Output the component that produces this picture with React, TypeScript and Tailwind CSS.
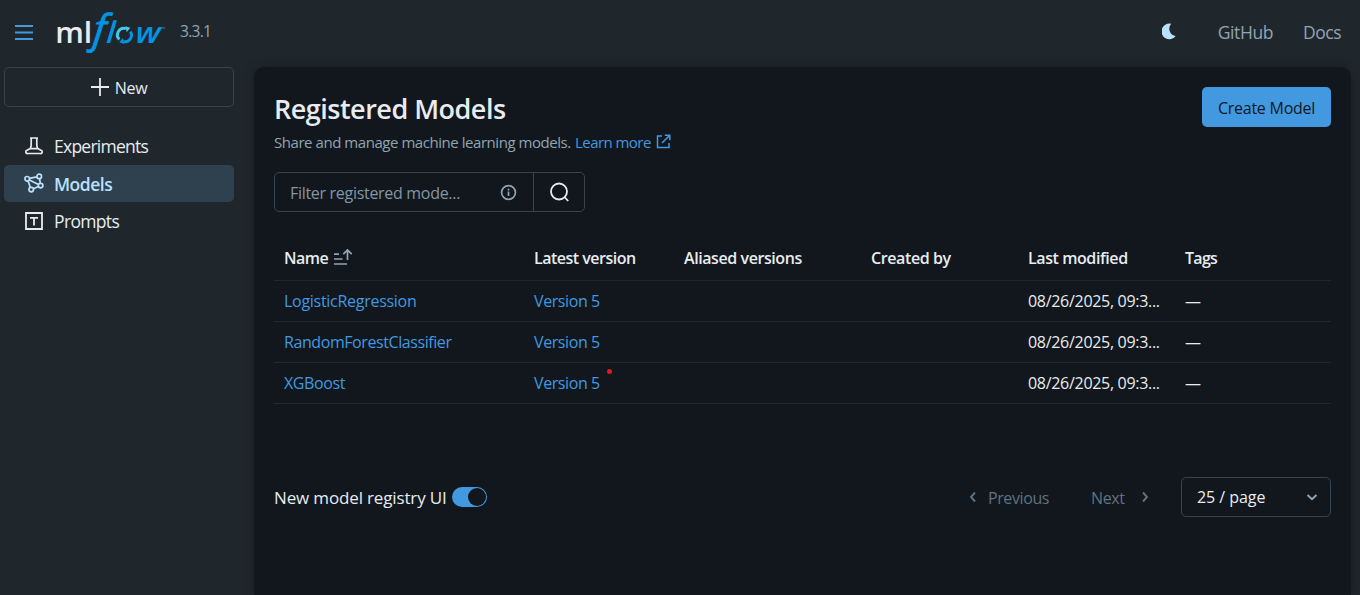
import type { ReactNode } from "react";

const models = [
  { name: "LogisticRegression", tracking: "tracking-[-0.28px]" },
  { name: "RandomForestClassifier", tracking: "tracking-[-0.42px]" },
  { name: "XGBoost", tracking: "tracking-[-0.4px]" },
];

function Logo() {
  return (
    <svg width="112" height="50" viewBox="56 5 112 50" className="block overflow-visible" fontFamily="'Open Sans', sans-serif">
      <text x="55.2" y="43" fontSize="29.5" fontWeight="600" fill="#E8ECF0" textLength="37" lengthAdjust="spacingAndGlyphs">ml</text>
      <text transform="translate(92.2 42.7) skewX(-6)" fontSize="40" fontStyle="italic" fill="#0194E2" stroke="#0194E2" strokeWidth="0.8">f</text>
      <text transform="translate(106 43) skewX(-5)" fontSize="30" fontWeight="600" fontStyle="italic" fill="#0194E2">l</text>
      <text transform="translate(135 43) skewX(-4)" fontSize="29.5" fontWeight="600" fontStyle="italic" fill="#0194E2" textLength="25" lengthAdjust="spacingAndGlyphs">w</text>
      <path d="M119.400 39.500A6.500 6.500 0 0 1 126 28.700" fill="none" stroke="#43C9ED" strokeWidth="3" />
      <path d="M125.400 26.200l4.900 1.600-3.600 4.400z" fill="#43C9ED" />
      <path d="M130.300 31.600A6.500 6.500 0 0 1 123.600 41.600" fill="none" stroke="#0194E2" strokeWidth="3" />
      <path d="M124.300 44l-5-1.700 3.700-4.400z" fill="#0194E2" />
      <text x="161" y="30.5" fontSize="5.500" fill="#3d7fa6">™</text>
    </svg>
  );
}

function NavItem({ icon, children, tracking, active }: { icon: ReactNode; children: ReactNode; tracking: string; active?: boolean }) {
  return (
    <a className={active
      ? "flex h-[37.5px] items-center gap-[10px] rounded-[5px] bg-[#2F404E] pl-5 text-[17.5px] font-semibold text-[#BAE1FC]"
      : "flex h-[37.5px] items-center gap-[10px] rounded-[5px] pl-5 text-[17.5px] text-[#E8ECF0]"}>
      {icon}
      <span className={tracking}>{children}</span>
    </a>
  );
}

const FlaskIcon = () => (
  <svg width="20" height="20" viewBox="0 0 20 20" fill="none" stroke="currentColor" strokeWidth="1.7" strokeLinejoin="round">
    <path d="M6 2h8M7.200 2v7.500L6.400 12.400 3 14.200a1.700 1.700 0 0 0 .8 3.300h12.400a1.700 1.700 0 0 0 .8-3.300L13.600 12.400 12.800 9.500V2M6.200 12.600h7.600" />
  </svg>
);

const ModelsIcon = () => (
  <svg width="20" height="20" viewBox="0 0 20 20" fill="none" stroke="currentColor" strokeWidth="1.7">
    <circle cx="3.200" cy="5.800" r="2.300" />
    <circle cx="15.200" cy="3.400" r="2.300" />
    <circle cx="16.600" cy="12.600" r="2.300" />
    <circle cx="7.200" cy="16.600" r="2.300" />
    <path d="M5.500 5.300l7.400-1.400M15.600 5.700l.7 4.600M4.100 8l2.200 6.400M9.400 15.700l5-2.200M5.300 7l9.200 4.600" />
  </svg>
);

const PromptIcon = () => (
  <svg width="20" height="20" viewBox="0 0 20 20" fill="none" stroke="currentColor" strokeWidth="1.8">
    <path d="M2 2h16v16H2zM6 6.9h8M10 6.9V14.5" />
  </svg>
);

const Chevron = ({ d }: { d: string }) => (
  <svg width="12" height="12" viewBox="0 0 12 12" fill="none" stroke="currentColor" strokeWidth="1.9">
    <path d={d} />
  </svg>
);

export default function App() {
  return (
    <div className="flex h-[595px] w-[1360px] flex-col overflow-hidden bg-[#1F272D] font-['Open_Sans','Noto_Sans',sans-serif] text-[16px] text-[#E8ECF0]">
      <header className="flex h-[67px] shrink-0 items-center pr-[19px] pb-[5px] pl-[15px]">
        <svg className="mt-px" width="18" height="16" viewBox="0 0 18 16" fill="none" stroke="#4299E0" strokeWidth="1.900">
          <path d="M0 2h18M0 8.5h18M0 15h18" />
        </svg>
        <div className="-mt-0.5 ml-[23px]"><Logo /></div>
        <span className="ml-3 pt-0.5 text-[15.5px] tracking-[-0.7px] text-[#92A4B3]">3.3.1</span>
        <svg className="mt-px ml-auto" width="14" height="17" viewBox="0 0 14 17">
          <path d="M9.200.7A7.900 7.900 0 1 0 13.700 13.100 7.500 7.500 0 0 1 9.200.700z" fill="#BAE1FC" />
        </svg>
        <a className="ml-[42px] pt-[3px] text-[17.5px] tracking-[-0.4px] text-[#92A4B3]">GitHub</a>
        <a className="ml-[30px] pt-[3px] text-[17.5px] tracking-[-0.5px] text-[#92A4B3]">Docs</a>
      </header>
      <div className="flex min-h-0 flex-1">
        <aside className="w-[254px] shrink-0 pr-5 pl-1">
          <button className="flex h-10 w-full items-center justify-center gap-1.5 rounded-[5px] border border-[#37444F] tracking-[-0.3px]">
            <svg width="18" height="18" viewBox="0 0 18 18" stroke="currentColor" strokeWidth="1.8"><path d="M9 0v18M0 9h18" /></svg>
            <span className="pt-0.5">New</span>
          </button>
          <nav className="mt-5">
            <NavItem icon={<FlaskIcon />} tracking="tracking-[-0.75px]">Experiments</NavItem>
            <NavItem icon={<ModelsIcon />} tracking="pt-px tracking-[-0.5px]" active>Models</NavItem>
            <NavItem icon={<PromptIcon />} tracking="tracking-[-0.65px]">Prompts</NavItem>
          </nav>
        </aside>
        <main className="mr-[9px] flex-1 rounded-t-[10px] bg-[#11171C] px-5 pt-5 shadow-[0_0_12px_rgba(0,0,0,0.3)]">
          <div className="flex h-10 items-center justify-between">
            <h1 className="pt-1 text-[27px] font-semibold tracking-[-0.5px]">Registered Models</h1>
            <button className="h-10 w-[129px] rounded-[5px] bg-[#4299E0] pt-0.5 tracking-[-0.25px] whitespace-nowrap text-[#11171C]">Create Model</button>
          </div>
          <p className="mt-[3px] flex h-6 items-center text-[15px] whitespace-nowrap text-[#92A4B3]">
            <span className="w-[301px] tracking-[-0.45px]">Share and manage machine learning models.</span>
            <a className="flex items-center gap-[5px] tracking-[-0.55px] text-[#4299E0]">
              <span>Learn more</span>
              <svg className="-mt-0.5" width="15" height="15" viewBox="0 0 15 15" fill="none" stroke="currentColor" strokeWidth="1.5">
                <path d="M6 2H1.5v11.5H13V9M8.8 1.2h5v5M13.5 1.5L6 9" />
              </svg>
            </a>
          </p>
          <div className="mt-[18px] flex h-10 w-[311px] rounded-[5px] border border-[#37444F]">
            <div className="flex flex-1 items-center justify-between pr-4 pl-[15px] text-[#8396A5]">
              <span className="pt-0.5 tracking-[-0.3px]">Filter registered mode...</span>
              <svg width="17" height="17" viewBox="0 0 17 17" fill="none" stroke="#92A4B3" strokeWidth="1.7">
                <circle cx="8.5" cy="8.5" r="6.9" /><path d="M8.5 7.6V12M8.5 4.7v1.8" />
              </svg>
            </div>
            <div className="flex w-[51px] items-center justify-center border-l border-[#37444F]">
              <svg width="20" height="20" viewBox="0 0 20 20" fill="none" stroke="#E8ECF0" strokeWidth="1.8">
                <circle cx="10" cy="9.5" r="8" /><path d="M15.500 15l3.700 4" />
              </svg>
            </div>
          </div>
          <div className="mt-[23px]">
            <div className="grid h-[46px] grid-cols-[250px_150px_187px_157px_157px_156px] items-center border-b border-[#20282F] pt-px font-semibold tracking-[-0.5px] whitespace-nowrap *:pl-2.5">
              <div className="flex items-center gap-1.5">
                <span>Name</span>
                <svg className="-mt-0.5" width="19" height="18" viewBox="0 0 19 18" fill="none" stroke="#92A4B3" strokeWidth="1.7">
                  <path d="M0 6.2h5M0 11h8.5M0 16h13M13.5 12V2M9.3 6.2L13.5 2l4.2 4.2" />
                </svg>
              </div>
              <div>Latest version</div>
              <div className="tracking-[-0.42px]">Aliased versions</div>
              <div className="tracking-[-0.4px]">Created by</div>
              <div className="tracking-[-0.42px]">Last modified</div>
              <div className="tracking-[-0.7px]">Tags</div>
            </div>
            {models.map((m, i) => (
              <div key={m.name} className="grid h-[41px] grid-cols-[250px_150px_187px_157px_157px_156px] items-center border-b border-[#20282F] tracking-[-0.4px] whitespace-nowrap *:pl-2.5">
                <a className={`text-[#4299E0] ${m.tracking}`}>{m.name}</a>
                <div className="relative text-[#4299E0]">
                  Version 5
                  {i === 2 && <i className="absolute top-[-2px] left-[83px] size-[5px] rounded-full bg-[#E5191C]" />}
                </div>
                <div />
                <div />
                <div className="tracking-[-0.3px]">08/26/2025, 09:3...</div>
                <div>—</div>
              </div>
            ))}
          </div>
          <div className="mt-[73px] flex h-10 items-center">
            <span className="w-[178px] pt-px text-[17px] tracking-[-0.15px] whitespace-nowrap">New model registry UI</span>
            <div className="flex h-5 w-[35px] justify-end rounded-full bg-[#4299E0] p-px">
              <span className="size-[18px] rounded-full bg-[#11171C]" />
            </div>
            <div className="ml-auto flex items-center text-[#5F7281]">
              <Chevron d="M8 1.5L4 6l4 4.5" />
              <span className="ml-[9px] w-[103px] pt-0.5 tracking-[-0.4px]">Previous</span>
              <span className="w-12 pt-0.5 tracking-[-0.4px]">Next</span>
              <Chevron d="M4 1.5L8 6l-4 4.5" />
            </div>
            <div className="ml-[30px] flex h-10 w-[150px] items-center justify-between rounded-[5px] border border-[#37444F] pr-3 pl-[15px]">
              <span className="tracking-[-0.05px]">25 / page</span>
              <span className="text-[#92A4B3]"><Chevron d="M1.5 4L6 8.2 10.500 4" /></span>
            </div>
          </div>
        </main>
      </div>
    </div>
  );
}
